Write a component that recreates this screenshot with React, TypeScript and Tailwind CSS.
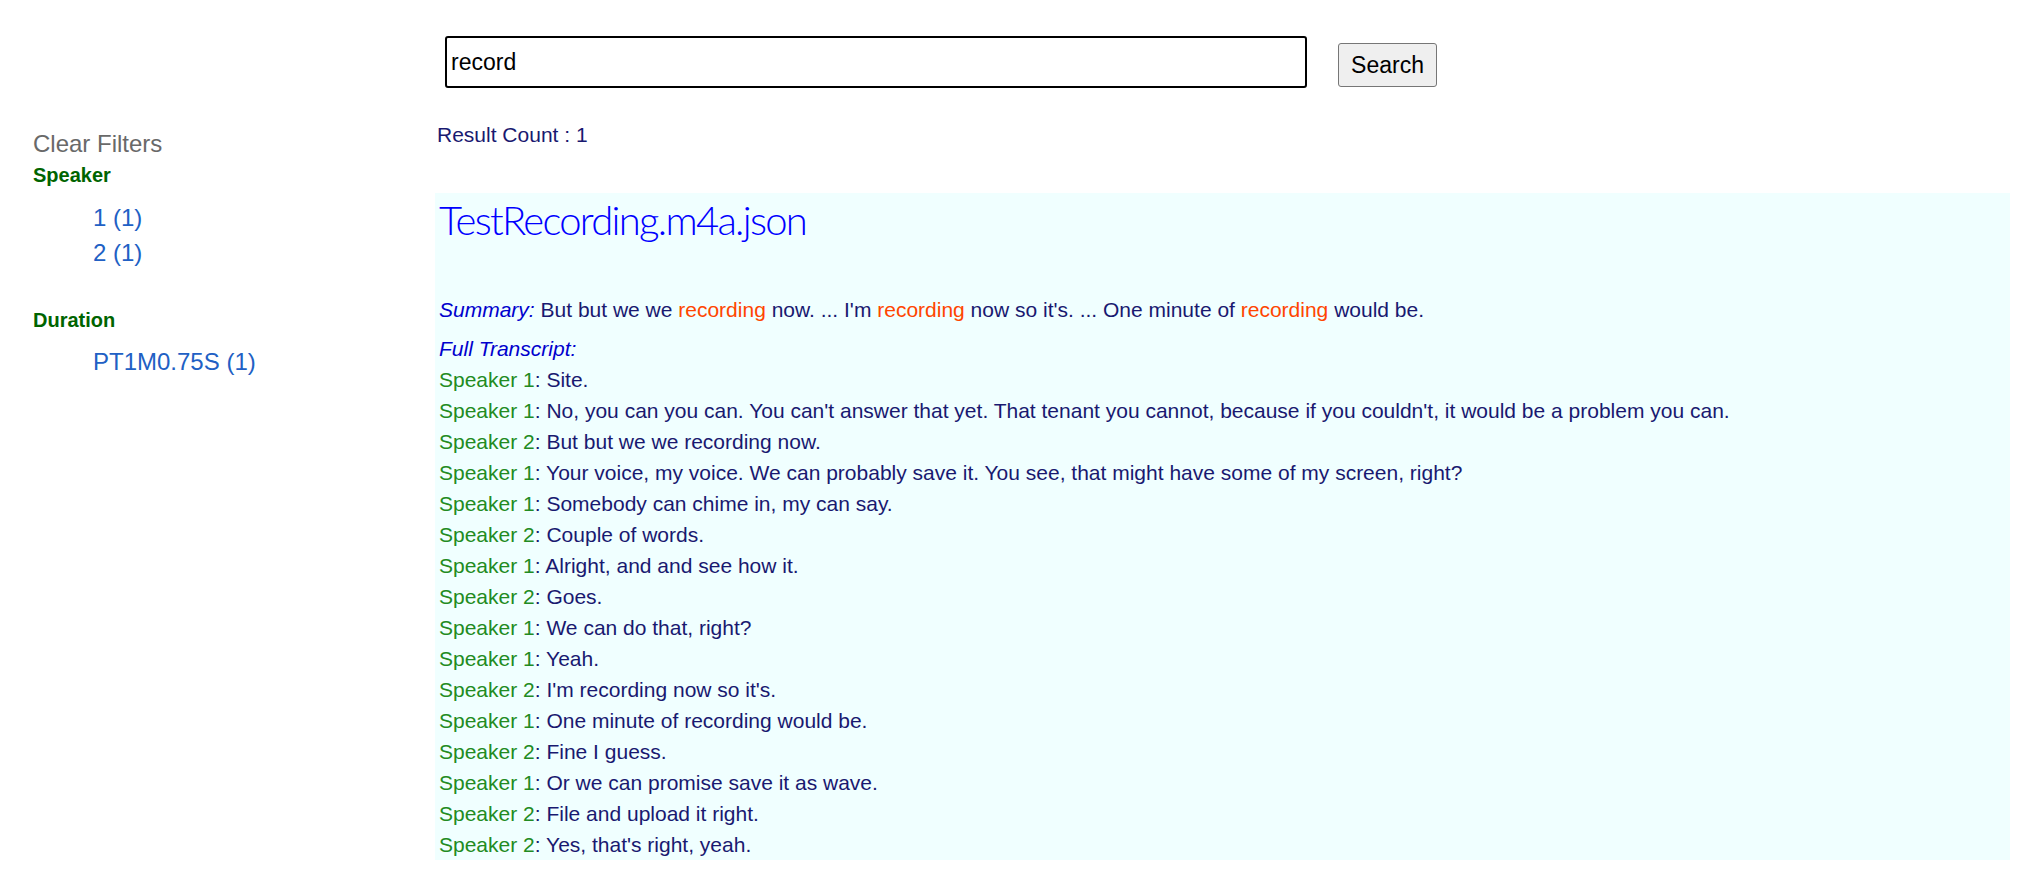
import { useState } from 'react'

type Line = { speaker: number; text: string }

const transcript: Line[] = [
    { speaker: 1, text: 'Site.' },
    { speaker: 1, text: "No, you can you can. You can't answer that yet. That tenant you cannot, because if you couldn't, it would be a problem you can." },
    { speaker: 2, text: 'But but we we recording now.' },
    { speaker: 1, text: 'Your voice, my voice. We can probably save it. You see, that might have some of my screen, right?' },
    { speaker: 1, text: 'Somebody can chime in, my can say.' },
    { speaker: 2, text: 'Couple of words.' },
    { speaker: 1, text: 'Alright, and and see how it.' },
    { speaker: 2, text: 'Goes.' },
    { speaker: 1, text: 'We can do that, right?' },
    { speaker: 1, text: 'Yeah.' },
    { speaker: 2, text: "I'm recording now so it's." },
    { speaker: 1, text: 'One minute of recording would be.' },
    { speaker: 2, text: 'Fine I guess.' },
    { speaker: 1, text: 'Or we can promise save it as wave.' },
    { speaker: 2, text: 'File and upload it right.' },
    { speaker: 2, text: "Yes, that's right, yeah." },
]

function Hit({ children }: { children: string }) {
    return <span className="text-[#ff4500]">{children}</span>
}

function Sidebar() {
    return (
        <aside className="w-[435px] shrink-0 pl-[33px] pt-[130px]">
            <div className="text-[24px] leading-[28px] text-[#696969]">Clear Filters</div>
            <div className="mt-[5px] text-[20px] leading-[24px] font-bold text-[#006400]">Speaker</div>
            <ul className="mt-[13px] pl-[60px] text-[24px] leading-[35px] text-[#2160c4]">
                <li>1 (1)</li>
                <li>2 (1)</li>
            </ul>
            <div className="mt-[38px] text-[20px] leading-[24px] font-bold text-[#006400]">Duration</div>
            <ul className="mt-[12px] pl-[60px] text-[24px] leading-[35px] text-[#2160c4]">
                <li>PT1M0.75S (1)</li>
            </ul>
        </aside>
    )
}

export default function App() {
    const [query, setQuery] = useState('record')

    return (
        <div className="flex min-h-[875px] bg-white font-['Liberation_Sans',Arial,sans-serif]">
            <Sidebar />

            <main className="flex-1 pr-[14px]">
                {/* search bar */}
                <div className="flex items-start pt-[36px]">
                    <input
                        value={query}
                        onChange={(e) => setQuery(e.target.value)}
                        className="ml-[10px] h-[52px] w-[862px] rounded-[3px] border-2 border-black px-[4px] text-[23px] text-black outline-none"
                    />
                    <button className="ml-[31px] mt-[7px] h-[44px] w-[99px] rounded-[3px] border border-[#767676] bg-[#efefef] text-[23px] text-black">
                        Search
                    </button>
                </div>

                <div className="mt-[35px] pl-[2px] text-[21px] leading-[24px] text-[#191970]">
                    Result Count : 1
                </div>

                {/* result */}
                <div className="mt-[46px] bg-[#f0ffff] pl-[4px]">
                    <h2 className="pt-[3px] font-['Lato',sans-serif] text-[40px] leading-[48px] font-light tracking-[-1.7px] text-[#0000ff]">
                        TestRecording.m4a.json
                    </h2>

                    <p className="mt-[50px] text-[21px] leading-[31px] text-[#191970]">
                        <em className="text-[#0000cd]">Summary:</em> But but we we <Hit>recording</Hit> now. ... I'm{' '}
                        <Hit>recording</Hit> now so it's. ... One minute of <Hit>recording</Hit> would be.
                    </p>

                    <div className="mt-[8px] text-[21px] leading-[31px] text-[#191970]">
                        <em className="text-[#0000cd]">Full Transcript:</em>
                        {transcript.map((line, i) => (
                            <div key={i}>
                                <span className="text-[#228b22]">Speaker {line.speaker}</span>: {line.text}
                            </div>
                        ))}
                    </div>
                </div>
            </main>
        </div>
    )
}
